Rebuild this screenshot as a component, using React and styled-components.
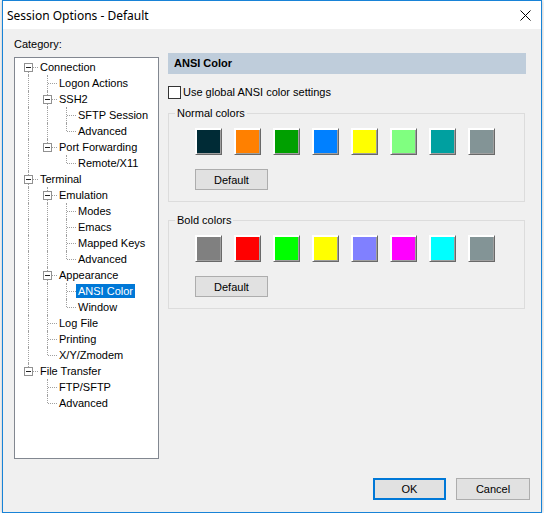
import React from "react";
import styled, { createGlobalStyle } from "styled-components";

const GlobalStyle = createGlobalStyle`
  html, body {
    margin: 0;
    padding: 0;
    background: #ffffff;
  }
  body {
    font-family: "Liberation Sans", Arial, sans-serif;
    font-size: 11px;
    color: #000;
  }
`;

const Window = styled.div`
  box-sizing: border-box;
  width: 540px;
  height: 513px;
  margin-left: 2px;
  border: 1px solid #1883d7;
  background: #f0f0f0;
  display: flex;
  flex-direction: column;
  box-shadow: 0 0 4px rgba(0, 0, 0, 0.3);
`;

const TitleBar = styled.div`
  height: 28px;
  flex: none;
  background: #fff;
  display: flex;
  align-items: center;
  justify-content: space-between;
  padding: 1px 10px 0 4px;
  box-sizing: border-box;
  font-family: "Noto Sans", "Liberation Sans", sans-serif;
  font-size: 12px;
`;

const Body = styled.div`
  flex: 1;
  display: flex;
  gap: 9px;
  padding: 8px 0 0 11px;
`;

const LeftColumn = styled.div`
  display: flex;
  flex-direction: column;
  width: 145px;
`;

const Caption = styled.div`
  line-height: 14px;
  height: 14px;
`;

const TreeBox = styled.div`
  box-sizing: border-box;
  margin-top: 6px;
  width: 145px;
  height: 402px;
  border: 1px solid #828790;
  background: #fff;
  padding: 1px 0 0 4px;
  overflow: hidden;
`;

const Row = styled.div`
  display: flex;
  height: 16px;
`;

const Guide = styled.span`
  position: relative;
  flex: none;
  width: 19px;
  &::before {
    content: "";
    display: ${(p) => (p.$line ? "block" : "none")};
    position: absolute;
    left: 9px;
    top: 0;
    bottom: 0;
    border-left: 1px dotted #a0a0a0;
  }
`;

const Branch = styled.span`
  position: relative;
  flex: none;
  width: 19px;
  &::before {
    content: "";
    position: absolute;
    left: 9px;
    top: ${(p) => (p.$first ? "8px" : "0")};
    bottom: ${(p) => (p.$last ? "8px" : "0")};
    border-left: 1px dotted #a0a0a0;
  }
  &::after {
    content: "";
    position: absolute;
    left: 10px;
    right: 0;
    top: 8px;
    border-top: 1px dotted #a0a0a0;
  }
`;

const Expander = styled.span`
  position: absolute;
  z-index: 1;
  left: 5px;
  top: 4px;
  width: 9px;
  height: 9px;
  box-sizing: border-box;
  border: 1px solid #919191;
  background: #fff;
  &::after {
    content: "";
    position: absolute;
    left: 1px;
    top: 3px;
    width: 5px;
    border-top: 1px solid #222;
  }
`;

const Label = styled.span`
  margin-top: 1px;
  height: 14px;
  line-height: 14px;
  padding: 0 2px;
  white-space: nowrap;
  background: ${(p) => (p.$selected ? "#0078d7" : "transparent")};
  color: ${(p) => (p.$selected ? "#fff" : "#000")};
`;

const RightColumn = styled.div`
  width: 358px;
  padding-top: 16px;
`;

const Header = styled.div`
  height: 21px;
  line-height: 21px;
  background: #bfcddb;
  font-weight: bold;
  padding-left: 6px;
`;

const CheckRow = styled.label`
  display: flex;
  align-items: center;
  gap: 2px;
  margin-top: 12px;
  height: 13px;
  line-height: 13px;
`;

const CheckBox = styled.span`
  box-sizing: border-box;
  width: 13px;
  height: 13px;
  border: 1px solid #333;
  background: #fff;
`;

const Group = styled.fieldset`
  margin: ${(p) => p.$top}px 1px 0 0;
  padding: 8px 6px 11px;
  border: 1px solid #dcdcdc;
  min-width: 0;
`;

const Legend = styled.legend`
  padding: 0 2px;
  line-height: 14px;
`;

const Swatches = styled.div`
  display: flex;
  gap: 12px;
  margin-left: 20px;
`;

const Swatch = styled.span`
  box-sizing: border-box;
  width: 27px;
  height: 27px;
  border: 1px solid;
  border-color: #fff #696969 #696969 #fff;
  box-shadow: inset 1px 1px 0 #fff, inset -1px -1px 0 #a0a0a0;
  background: ${(p) => p.$color};
`;

const Button = styled.button`
  box-sizing: border-box;
  width: ${(p) => p.$width || 73}px;
  height: ${(p) => p.$height || 21}px;
  padding: 0;
  background: #e1e1e1;
  border: ${(p) => (p.$primary ? "2px solid #0078d7" : "1px solid #adadad")};
  font-family: "Liberation Sans", Arial, sans-serif;
  font-size: 11px;
  color: #000;
`;

const GroupButton = styled(Button)`
  display: block;
  margin: 14px 0 0 20px;
`;

const Footer = styled.div`
  flex: none;
  display: flex;
  justify-content: flex-end;
  gap: 10px;
  padding: 0 11px 12px 0;
`;

const tree = [
  {
    label: "Connection",
    children: [
      { label: "Logon Actions" },
      { label: "SSH2", children: [{ label: "SFTP Session" }, { label: "Advanced" }] },
      { label: "Port Forwarding", children: [{ label: "Remote/X11" }] },
    ],
  },
  {
    label: "Terminal",
    children: [
      {
        label: "Emulation",
        children: [
          { label: "Modes" },
          { label: "Emacs" },
          { label: "Mapped Keys" },
          { label: "Advanced" },
        ],
      },
      {
        label: "Appearance",
        children: [{ label: "ANSI Color", selected: true }, { label: "Window" }],
      },
      { label: "Log File" },
      { label: "Printing" },
      { label: "X/Y/Zmodem" },
    ],
  },
  { label: "File Transfer", children: [{ label: "FTP/SFTP" }, { label: "Advanced" }] },
];

function flatten(nodes, level = 0, guides = [], out = []) {
  nodes.forEach((n, i) => {
    const last = i === nodes.length - 1;
    out.push({ ...n, level, guides, last, first: level === 0 && i === 0 });
    if (n.children) flatten(n.children, level + 1, [...guides, !last], out);
  });
  return out;
}

const rows = flatten(tree);

const normalColors = ["#002b36", "#ff8000", "#00a000", "#0080ff", "#ffff00", "#80ff80", "#00a0a0", "#839496"];
const boldColors = ["#808080", "#ff0000", "#00ff00", "#ffff00", "#8080ff", "#ff00ff", "#00ffff", "#839496"];

function CloseIcon() {
  return (
    <svg width="11" height="11" viewBox="0 0 11 11">
      <path d="M0.5 0.5 L10.5 10.5 M10.5 0.5 L0.5 10.5" stroke="#000" strokeWidth="1" />
    </svg>
  );
}

function ColorGroup({ title, colors, top }) {
  return (
    <Group $top={top}>
      <Legend>{title}</Legend>
      <Swatches>
        {colors.map((c, i) => (
          <Swatch key={i} $color={c} />
        ))}
      </Swatches>
      <GroupButton>Default</GroupButton>
    </Group>
  );
}

export default function App() {
  return (
    <>
      <GlobalStyle />
      <Window>
        <TitleBar>
          <span>Session Options - Default</span>
          <CloseIcon />
        </TitleBar>
        <Body>
          <LeftColumn>
            <Caption>Category:</Caption>
            <TreeBox>
              {rows.map((r, i) => (
                <Row key={i}>
                  {r.guides.map((g, j) => (
                    <Guide key={j} $line={g} />
                  ))}
                  <Branch $first={r.first} $last={r.last}>
                    {r.children && <Expander />}
                  </Branch>
                  <Label $selected={r.selected}>{r.label}</Label>
                </Row>
              ))}
            </TreeBox>
          </LeftColumn>
          <RightColumn>
            <Header>ANSI Color</Header>
            <CheckRow>
              <CheckBox />
              <span>Use global ANSI color settings</span>
            </CheckRow>
            <ColorGroup title="Normal colors" colors={normalColors} top={7} />
            <ColorGroup title="Bold colors" colors={boldColors} top={11} />
          </RightColumn>
        </Body>
        <Footer>
          <Button $primary $height={22}>OK</Button>
          <Button $width={74} $height={22}>Cancel</Button>
        </Footer>
      </Window>
    </>
  );
}
